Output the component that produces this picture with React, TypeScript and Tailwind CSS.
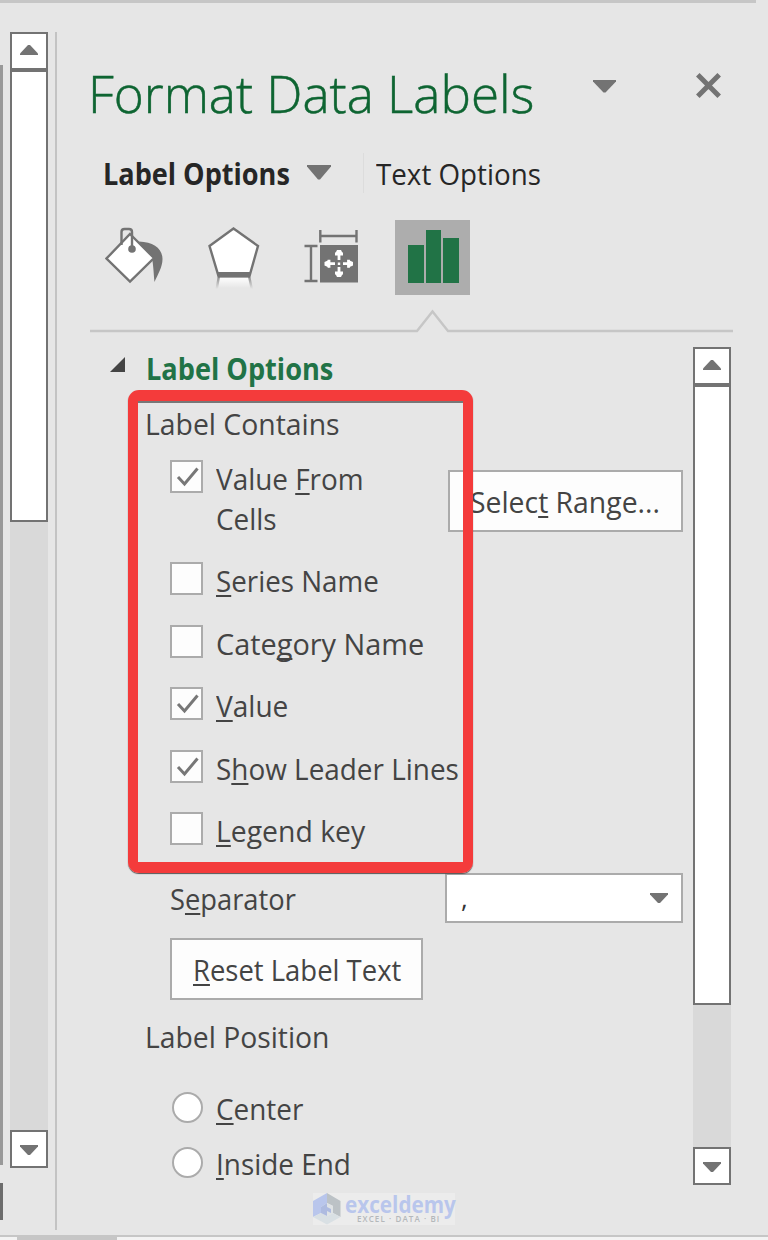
import { useState } from "react";

type Option = { id: string; before: string; key: string; after: string; width: string };

const options: Option[] = [
  { id: "series", before: "", key: "S", after: "eries Name", width: "scale-x-[.925]" },
  { id: "category", before: "Cate", key: "g", after: "ory Name", width: "scale-x-[.962]" },
  { id: "value", before: "", key: "V", after: "alue", width: "scale-x-[.935]" },
  { id: "leader", before: "S", key: "h", after: "ow Leader Lines", width: "scale-x-[.93]" },
  { id: "legend", before: "", key: "L", after: "egend key", width: "scale-x-[.945]" },
];

const Key = ({ children }: { children: string }) => (
  <span className="underline decoration-2 underline-offset-[3px] [text-decoration-skip-ink:none]">{children}</span>
);

const Arrow = ({ up = false, className = "" }: { up?: boolean; className?: string }) => (
  <svg className={className} width="18" height="10" viewBox="0 0 18 10" fill="#737373">
    <path d={up ? "M0 10V8.5L8 0H10L18 8.5V10Z" : "M0 0V1.5L8 10H10L18 1.5V0Z"} />
  </svg>
);

const CheckBox = ({ checked, onClick }: { checked: boolean; onClick: () => void }) => (
  <button className="mt-[2px] h-[33px] w-[33px] shrink-0 border-2 border-[#ababab] bg-[#fdfdfd]" onClick={onClick}>
    {checked && (
      <svg width="29" height="29" viewBox="0 0 29 29" fill="none" stroke="#777777" strokeWidth="3">
        <path d="M6 15L12.500 22L25.500 6.500" />
      </svg>
    )}
  </button>
);

const ScrollBar = ({ thumb, className }: { thumb: string; className: string }) => (
  <div className={`flex w-[38px] shrink-0 flex-col bg-[#d9d9d9] ${className}`}>
    <div className="flex h-[38px] shrink-0 items-center justify-center border-2 border-[#737373] bg-white">
      <Arrow up className="-mt-[2px]" />
    </div>
    <div className={`shrink-0 border-2 border-[#737373] bg-white ${thumb}`} />
    <div className="mt-auto flex h-[38px] shrink-0 items-center justify-center border-2 border-[#737373] bg-white">
      <Arrow className="mt-[2px]" />
    </div>
  </div>
);

const App: React.FC = () => {
  const [checked, setChecked] = useState<Record<string, boolean>>({ cells: true, value: true, leader: true });
  const toggle = (id: string) => setChecked({ ...checked, [id]: !checked[id] });

  return (
    <div className="relative flex h-[1240px] w-[768px] flex-col overflow-hidden bg-[#e6e6e6] font-['Open_Sans','Noto_Sans',sans-serif] text-[30px] leading-[42px] whitespace-nowrap text-[#444444]">
      <div className="h-[3px] w-[756px] shrink-0 bg-[#c6c6c6]" />

      <div className="flex h-[1232px] shrink-0">
        <div className="flex w-[3px] flex-col">
          <div className="mt-[62px] h-[1100px] bg-[#999999]" />
          <div className="mt-[18px] h-[37px] bg-[#6c6c6c]" />
        </div>
        <ScrollBar className="mt-[29px] ml-[7px] h-[1136px]" thumb="h-[452px]" />
        <div className="mt-[29px] ml-[7px] h-[1198px] w-[2px] bg-[#c3c3c3]" />

        <div className="w-[711px] pt-[53px]">
          <div className="flex h-[72px]">
            <h1 className="ml-[31px] w-[505px] origin-left scale-x-[.984] text-[52px] leading-[74px] font-light text-[#0e6532] [-webkit-text-stroke:0.5px_#0e6532]">
              Format Data Labels
            </h1>
            <svg className="mt-[24px]" width="23" height="13" viewBox="0 0 23 13" fill="#737373">
              <path d="M0 0H23V1.5L12.5 12.5H10.5L0 1.5Z" />
            </svg>
            <svg className="mt-[17px] ml-[80px]" width="25" height="25" viewBox="0 0 25 25" stroke="#737373" strokeWidth="5">
              <path d="M1.8 1.8L23.2 23.2M23.2 1.8L1.8 23.2" />
            </svg>
          </div>

          <div className="mt-[25px] flex h-[40px] text-[#262626]">
            <div className="ml-[46px] w-[204px] origin-left scale-x-[.903] font-bold">Label Options</div>
            <svg className="mt-[12px]" width="24" height="15" viewBox="0 0 24 15" fill="#737373">
              <path d="M0 0H24V1.5L13 14.5H11L0 1.5Z" />
            </svg>
            <div className="ml-[32px] w-px bg-[#dcdcdc]" />
            <div className="ml-[12px] origin-left scale-x-[.925]">Text Options</div>
          </div>

          <div className="mt-[27px] flex h-[75px]">
            <svg className="ml-[48px]" width="60" height="75" viewBox="0 0 60 75" fill="none">
              <path d="M34 21.5C49 22 57.500 29 57.500 39C57.500 47 53 54 49.5 62C48.500 52 48.500 46 47 38Z" fill="#737373" />
              <path d="M25 14L49 38L25 61.5L1.5 38.5Z" fill="#fff" stroke="#737373" strokeWidth="2.4" />
              <path d="M16.500 25V12Q16.500 9 19.500 9H24Q27 9 27 12V28" stroke="#737373" strokeWidth="2.4" />
              <circle cx="27" cy="29" r="3.8" fill="#737373" />
            </svg>
            <svg className="ml-[42px]" width="54" height="75" viewBox="0 0 54 75" fill="none">
              <defs>
                <linearGradient id="reflect" x1="0" y1="0" x2="0" y2="1">
                  <stop offset="0" stopColor="#ffffff" />
                  <stop offset="1" stopColor="#e6e6e6" />
                </linearGradient>
                <linearGradient id="reflectEdge" x1="0" y1="0" x2="0" y2="1">
                  <stop offset="0" stopColor="#909090" />
                  <stop offset="1" stopColor="#e6e6e6" />
                </linearGradient>
              </defs>
              <path d="M11 57H43L45 68H9Z" fill="url(#reflect)" />
              <path d="M10.5 57H13L11 69H8.5ZM41 57H43.5L46 69H43.5Z" fill="url(#reflectEdge)" />
              <path d="M26.5 8.5L51 26L42.5 56H11.5L2.5 26Z" fill="#fff" stroke="#737373" strokeWidth="2.4" />
              <path d="M10.5 52H43V57.5H11Z" fill="#737373" />
            </svg>
            <svg className="ml-[43px]" width="54" height="75" viewBox="0 0 54 75">
              <path d="M16 25H54V62.5H16Z" fill="#737373" />
              <path d="M16.3 10V22.5M52.5 10V22.5M16.3 16H52.5M0.5 26H13.5M0.5 61H13.5M7 26V61" stroke="#737373" strokeWidth="2.4" fill="none" />
              <path d="M35 31V40M31 34H39M35 47V56M31 53H39M21.5 43.7H31M25 39.7V47.7M39 43.7H48M44.5 39.7V47.7" stroke="#fff" strokeWidth="2.8" fill="none" />
              <path d="M33.8 42.5H36.2V44.9H33.8ZM33 30H37L39 34H31ZM33 57H37L39 53H31ZM20.5 42V45.4L25 47.5V40ZM49 42V45.4L44.5 47.5V40Z" fill="#fff" />
            </svg>
            <div className="ml-[37px] flex h-[75px] w-[75px] items-end gap-[2px] bg-[#adadad] pb-[12px] pl-[13px]">
              <div className="h-[38px] w-[15.5px] bg-[#217346]" />
              <div className="h-[53px] w-[15.5px] bg-[#217346]" />
              <div className="h-[45px] w-[15.5px] bg-[#217346]" />
            </div>
          </div>

          <svg className="mt-[14px] ml-[33px]" width="643" height="24" viewBox="0 0 643 24" fill="none">
            <path d="M0 22H327L342.5 2.5L358 22H643" stroke="#c6c6c6" strokeWidth="2.4" />
          </svg>

          <div className="mt-[14px] flex">
            <div className="w-[636px]">
              <div className="mt-px flex h-[40px] pl-[53px]">
                <svg className="mt-[9px]" width="15" height="15" viewBox="0 0 15 15" fill="#444444">
                  <path d="M15 0V15H0Z" />
                </svg>
                <h2 className="ml-[21px] origin-left scale-x-[.905] font-bold text-[#217346]">Label Options</h2>
              </div>
              <div className="mt-[15px] ml-[88px] h-[40px] origin-left scale-x-[.945]">Label Contains</div>

              <div className="mt-[15px] flex h-[80px] pl-[113px]">
                <CheckBox checked={checked.cells} onClick={() => toggle("cells")} />
                <div className="mt-px ml-[13px] w-[232px] origin-left scale-x-[.93] leading-[40px]">
                  Value <Key>F</Key>rom
                  <br />
                  Cells
                </div>
                <button className="mt-[12px] flex h-[62px] w-[235px] items-center border-2 border-[#ababab] bg-[#fdfdfd] pt-[2px] pl-[20px]">
                  <span className="origin-left scale-x-[.945]">
                    Selec<Key>t</Key> Range...
                  </span>
                </button>
              </div>

              <div className="mt-[22px] flex flex-col gap-[22.5px]">
                {options.map((o) => (
                  <div className="flex h-[40px] pl-[113px]" key={o.id}>
                    <CheckBox checked={!!checked[o.id]} onClick={() => toggle(o.id)} />
                    <div className={`ml-[12.5px] origin-left ${o.width}`}>
                      {o.before}
                      <Key>{o.key}</Key>
                      {o.after}
                    </div>
                  </div>
                ))}
              </div>

              <div className="mt-[23px] flex h-[50px] pl-[113px]">
                <div className="mt-[5px] w-[275px] origin-left scale-x-[.91]">
                  S<Key>e</Key>parator
                </div>
                <div className="flex w-[238px] items-center border-2 border-[#ababab] bg-white pr-[13px] pl-[14px]">
                  <span className="text-[26px] text-[#333]">,</span>
                  <Arrow className="ml-auto" />
                </div>
              </div>

              <button className="mt-[15px] ml-[113px] flex h-[62px] w-[253px] items-center border-2 border-[#ababab] bg-[#fdfdfd] pt-px pl-[20.5px]">
                <span className="origin-left scale-x-[.915]">
                  <Key>R</Key>eset Label Text
                </span>
              </button>

              <div className="mt-[16px] ml-[88px] h-[40px] origin-left scale-x-[.943]">Label Position</div>

              <div className="mt-[32px] flex h-[40px] pl-[115px]">
                <div className="mt-[4px] h-[31px] w-[31px] rounded-full border-2 border-[#ababab] bg-white" />
                <div className="ml-[12.5px] origin-left scale-x-[.93]">
                  <Key>C</Key>enter
                </div>
              </div>
              <div className="mt-[15px] flex h-[40px] pl-[115px]">
                <div className="mt-[4px] h-[31px] w-[31px] rounded-full border-2 border-[#ababab] bg-white" />
                <div className="ml-[12.5px] origin-left scale-x-[.93]">
                  <Key>I</Key>nside End
                </div>
              </div>
            </div>
            <ScrollBar className="h-[838px]" thumb="h-[620px]" />
          </div>
        </div>
      </div>

      <div className="h-[5px] border-t-2 border-[#c6c6c6] bg-[#f3f3f3] pl-[17px]">
        <div className="h-[3px] w-[100px] bg-[#c6c6c6]" />
      </div>

      {/* highlight frame */}
      <div className="pointer-events-none absolute top-[390px] left-[127.5px] h-[483px] w-[345px] rounded-[11px] border-x-[10px] border-y-[11px] border-[#f43b3b] shadow-[0_1px_1px_#555,inset_0_2px_0_#777]" />

      {/* watermark */}
      <div className="absolute top-[1193px] left-[313px] flex h-[32px] w-[142px] bg-[#ececec]">
        <svg className="shrink-0" width="28" height="32" viewBox="0 0 28 32">
          <path d="M14 0V10L8 14V20L0 24V8Z" fill="#b9c6ec" />
          <path d="M14 0L27.5 8V24L20 20V13L14 10Z" fill="#bcc2c6" />
          <path d="M0 24L8 20L14 23L20 20L27.5 24L14 31.5Z" fill="#d9e0e4" />
          <path d="M14 10L20 13V20L14 23Z" fill="#dfe3e5" />
          <path d="M14 10L8 14V20L14 23Z" fill="#aebbe0" />
          <path d="M14 14L18 16V20L14 18Z" fill="#aebbe0" />
        </svg>
        <div className="ml-[4px] w-[110px]">
          <div className="h-[21px] origin-left scale-x-[.9] text-[23px] leading-[22px] font-bold text-[#b9c6ec]">exceldemy</div>
          <div className="ml-[12px] text-[8px] leading-[9px] font-semibold tracking-[1.1px] text-[#b4b8bb]">EXCEL · DATA · BI</div>
        </div>
      </div>
    </div>
  );
};

export default App;
